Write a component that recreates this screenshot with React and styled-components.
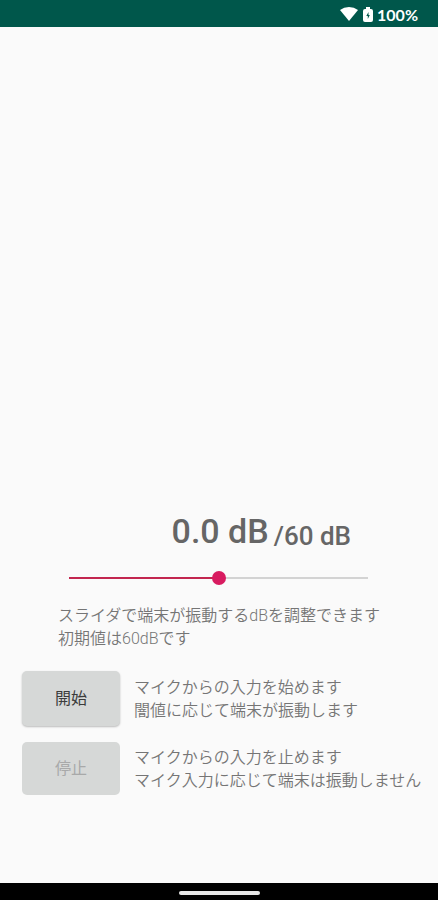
import React, { useState } from "react";
import styled, { createGlobalStyle } from "styled-components";

const GlobalStyle = createGlobalStyle`
  body {
    margin: 0;
    background-color: #fafafa;
    color: #757575;
    font-family: Roboto, "Noto Sans CJK JP", sans-serif;
  }
`;

const Screen = styled.div`
  min-height: 100vh;
  display: flex;
  flex-direction: column;
`;

const StatusBar = styled.header`
  height: 27px;
  padding: 1px 20px 0 0;
  box-sizing: border-box;
  display: flex;
  align-items: center;
  justify-content: flex-end;
  background-color: #00574b;
  color: #ffffff;
  font-family: Lato, sans-serif;
  font-size: 16px;
  font-weight: 700;

  svg {
    fill: #ffffff;
  }
`;

const WifiIcon = styled.svg`
  width: 18px;
  height: 14px;
  margin-right: 5px;
`;

const BatteryIcon = styled.svg`
  width: 10px;
  height: 15px;
  margin-right: 4px;
`;

const Main = styled.main`
  flex: 1;
  display: flex;
  flex-direction: column;
  justify-content: flex-end;
  padding: 0 20px 88px 22px;
`;

const Meter = styled.div`
  display: flex;
  align-items: flex-end;
  justify-content: flex-end;
  gap: 5px;
  padding-right: 67px;
  color: #666666;
  font-weight: 500;
`;

const Level = styled.output`
  font-size: 34px;
  line-height: 40px;
`;

const Threshold = styled.span`
  font-size: 26px;
  line-height: 30px;
`;

const Slider = styled.input`
  appearance: none;
  height: 14px;
  margin: 20px 50px 0 47px;
  background: linear-gradient(
      to right,
      #c2264f ${(props) => props.$percent}%,
      #d3d3d3 ${(props) => props.$percent}%
    )
    center / 100% 2px no-repeat;

  &::-webkit-slider-thumb {
    appearance: none;
    width: 14px;
    height: 14px;
    border-radius: 50%;
    background-color: #d81b60;
  }
`;

const Description = styled.p`
  margin: 0;
  font-size: 16px;
  line-height: 23px;
  font-weight: 350;
  white-space: nowrap;
`;

const SliderNote = styled(Description)`
  margin: 19px 0 21px 36px;
`;

const ActionRow = styled.div`
  display: flex;
  align-items: center;
  gap: 14px;

  & + & {
    margin-top: 16px;
  }
`;

const ActionButton = styled.button`
  width: 98px;
  height: ${(props) => (props.disabled ? "53px" : "55px")};
  flex-shrink: 0;
  padding: 0 0 4px;
  border: none;
  border-radius: 5px;
  background-color: #d6d8d7;
  box-shadow: ${(props) =>
    props.disabled ? "none" : "0 1px 2px rgba(0, 0, 0, 0.25)"};
  color: ${(props) => (props.disabled ? "#a8a9a9" : "#3c3c3c")};
  font-family: inherit;
  font-size: 16px;
`;

const NavigationBar = styled.footer`
  height: 17px;
  display: flex;
  align-items: center;
  justify-content: center;
  background-color: #000000;
`;

const HomeHandle = styled.span`
  width: 81px;
  height: 4px;
  margin-top: 2px;
  border-radius: 2px;
  background-color: #e8e8e8;
`;

const App = () => {
  const [threshold, setThreshold] = useState(60);
  const [isActive, setIsActive] = useState(false);

  return (
    <Screen>
      <GlobalStyle />
      <StatusBar>
        <WifiIcon viewBox="0 0 18 14" aria-hidden="true">
          <path d="M9 14 0 3Q4 0 9 0T18 3Z" />
        </WifiIcon>
        <BatteryIcon viewBox="0 0 10 15" aria-hidden="true">
          <path
            fillRule="evenodd"
            d="M3 0H7V2H8Q10 2 10 4V13Q10 15 8 15H2Q0 15 0 13V4Q0 2 2 2H3ZM5.5 5 3.3 9H4.8V12L6.8 8H5.5Z"
          />
        </BatteryIcon>
        <span>100%</span>
      </StatusBar>
      <Main>
        <Meter>
          <Level>0.0 dB</Level>
          <Threshold>/{threshold} dB</Threshold>
        </Meter>
        <Slider
          type="range"
          min="0"
          max="120"
          value={threshold}
          $percent={(threshold / 120) * 100}
          aria-labelledby="slider-note"
          onChange={(e) => setThreshold(Number(e.target.value))}
        />
        <SliderNote id="slider-note">
          スライダで端末が振動するdBを調整できます
          <br />
          初期値は60dBです
        </SliderNote>
        <ActionRow>
          <ActionButton
            disabled={isActive}
            aria-describedby="start-note"
            onClick={() => setIsActive(true)}
          >
            開始
          </ActionButton>
          <Description id="start-note">
            マイクからの入力を始めます
            <br />
            闇値に応じて端末が振動します
          </Description>
        </ActionRow>
        <ActionRow>
          <ActionButton
            disabled={!isActive}
            aria-describedby="stop-note"
            onClick={() => setIsActive(false)}
          >
            停止
          </ActionButton>
          <Description id="stop-note">
            マイクからの入力を止めます
            <br />
            マイク入力に応じて端末は振動しません
          </Description>
        </ActionRow>
      </Main>
      <NavigationBar>
        <HomeHandle />
      </NavigationBar>
    </Screen>
  );
};

export default App;
